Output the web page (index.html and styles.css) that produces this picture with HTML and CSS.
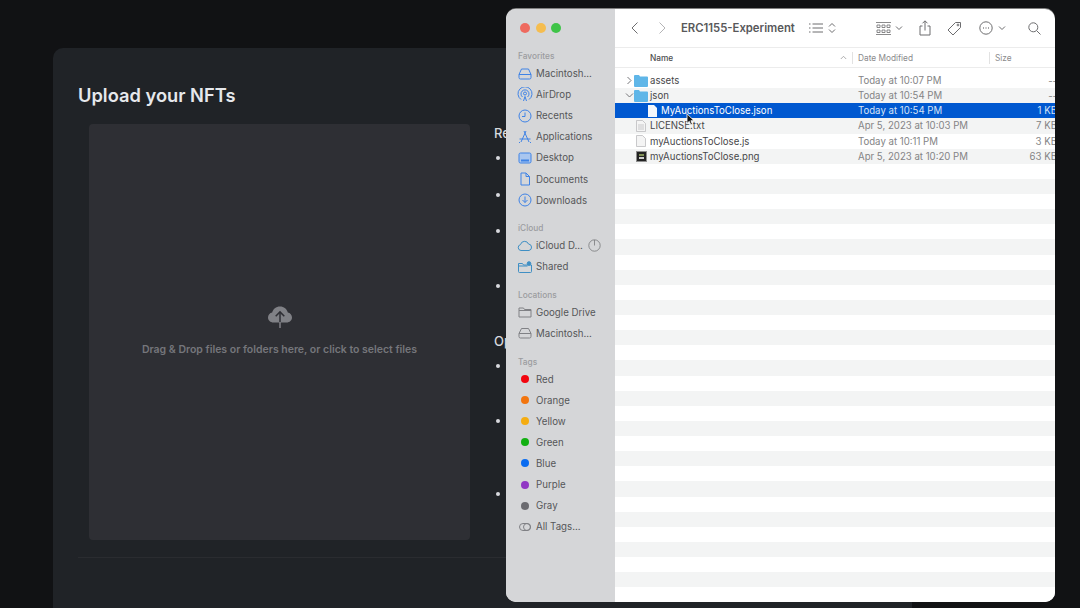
FILE: index.html
```html
<!DOCTYPE html>
<html lang="en">
<head>
  <meta charset="UTF-8" />
  <meta name="viewport" content="width=device-width, initial-scale=1.0"/>
  <title>Upload your NFTs</title>
  <link rel="stylesheet" href="styles.css">
</head>
<body>
  <main class="panel">
    <h1 class="panel-title">Upload your NFTs</h1>
    <div class="panel-body">
      <div class="dropzone">
        <svg class="upload-icon" width="26" height="24" viewBox="0 0 26 24">
          <path fill="#808186" d="M6.500 17.500C3.300 17.500 1 15.300 1 12.500c0-2.500 1.800-4.500 4.200-4.900C6 4 9 1.500 13 1.500s7 2.500 7.800 6.100c2.400.4 4.200 2.400 4.200 4.900 0 2.800-2.300 5-5.500 5z"/>
          <path fill="none" stroke="#2e2f34" stroke-width="1.500" d="M8.700 11.200 13 6.900l4.300 4.300"/>
          <path fill="none" stroke="#2e2f34" stroke-width="1.500" d="M13 7v10.500"/>
          <path fill="none" stroke="#808186" stroke-width="1.500" d="M13 17v6"/>
        </svg>
        <p class="dropzone-text">Drag &amp; Drop files or folders here, or click to select files</p>
      </div>
      <aside class="notes">
        <h2 class="notes-title">Re</h2>
        <ul class="notes-list">
          <li class="lines-2"></li>
          <li class="lines-2"></li>
          <li class="lines-3"></li>
          <li class="lines-2"></li>
        </ul>
        <h2 class="notes-title notes-second">Op</h2>
        <ul class="notes-list">
          <li class="lines-3"></li>
          <li class="lines-4"></li>
          <li class="lines-2"></li>
        </ul>
      </aside>
    </div>
    <div class="panel-rule"></div>
  </main>

  <section class="finder">
    <nav class="sidebar">
      <div class="traffic">
        <span class="light light-red"></span>
        <span class="light light-yellow"></span>
        <span class="light light-green"></span>
      </div>

      <h3 class="side-head">Favorites</h3>
      <div class="side-row"><svg class="side-icon blue" viewBox="0 0 16 16"><path d="M4.500 3h7l2.500 5.500v3a1.500 1.500 0 0 1-1.500 1.500h-9A1.500 1.500 0 0 1 2 11.500v-3zM2 8.500h12"/></svg>Macintosh...</div>
      <div class="side-row"><svg class="side-icon blue" viewBox="0 0 16 16"><circle cx="8" cy="6.500" r="1.500"/><path d="M5.500 10a4 4 0 1 1 5 0M4 12.500a7 7 0 1 1 8 0M6.500 14 8 9.500 9.500 14"/></svg>AirDrop</div>
      <div class="side-row"><svg class="side-icon blue" viewBox="0 0 16 16"><circle cx="8" cy="8" r="6"/><path d="M8 4.500V8.500H5"/></svg>Recents</div>
      <div class="side-row"><svg class="side-icon blue" viewBox="0 0 16 16"><path d="M9 2 4 13M7 2l5 11M2.500 10h11M2 14l1-1M14 14l-1-1"/></svg>Applications</div>
      <div class="side-row"><svg class="side-icon blue" viewBox="0 0 16 16"><rect x="2" y="3" width="12" height="10" rx="1.500" fill="#a9c6ef"/><path d="M4 10.500h8" stroke-width="2"/></svg>Desktop</div>
      <div class="side-row"><svg class="side-icon blue" viewBox="0 0 16 16"><path d="M4 2h5l3.500 3.500V14H4zM9 2v3.500h3.500"/></svg>Documents</div>
      <div class="side-row"><svg class="side-icon blue" viewBox="0 0 16 16"><circle cx="8" cy="8" r="6"/><path d="M8 4.500v6M5.500 8 8 10.500 10.500 8"/></svg>Downloads</div>

      <h3 class="side-head">iCloud</h3>
      <div class="side-row"><svg class="side-icon teal" viewBox="0 0 16 16"><path d="M4 12.500a3 3 0 0 1-.5-5.900A4.200 4.200 0 0 1 11.500 6a3.300 3.300 0 0 1 .5 6.500z"/></svg><span class="side-name">iCloud D...</span><svg class="side-status" width="13" height="13" viewBox="0 0 13 13"><circle cx="6.500" cy="6.500" r="5.700"/><path d="M6.500 1v5.500"/></svg></div>
      <div class="side-row"><svg class="side-icon teal" viewBox="0 0 16 16"><path d="M1.500 4.500h4l1 1.500h8v6.500a1 1 0 0 1-1 1h-11a1 1 0 0 1-1-1zM1.500 7h9"/><circle cx="12" cy="4.500" r="1.800" fill="#3f8fc4"/></svg>Shared</div>

      <h3 class="side-head">Locations</h3>
      <div class="side-row"><svg class="side-icon grey" viewBox="0 0 16 16"><path d="M2 4h4.500l1 1.500H14V13H2zM2 6.500h12"/></svg>Google Drive</div>
      <div class="side-row"><svg class="side-icon grey" viewBox="0 0 16 16"><path d="M4.500 3.500h7L14 8.500v3a1.500 1.500 0 0 1-1.500 1.500h-9A1.500 1.500 0 0 1 2 11.500v-3zM2 8.500h12"/></svg>Macintosh...</div>

      <h3 class="side-head">Tags</h3>
      <div class="side-row"><span class="tag-slot"><span class="tag-dot tag-red"></span></span>Red</div>
      <div class="side-row"><span class="tag-slot"><span class="tag-dot tag-orange"></span></span>Orange</div>
      <div class="side-row"><span class="tag-slot"><span class="tag-dot tag-yellow"></span></span>Yellow</div>
      <div class="side-row"><span class="tag-slot"><span class="tag-dot tag-green"></span></span>Green</div>
      <div class="side-row"><span class="tag-slot"><span class="tag-dot tag-blue"></span></span>Blue</div>
      <div class="side-row"><span class="tag-slot"><span class="tag-dot tag-purple"></span></span>Purple</div>
      <div class="side-row"><span class="tag-slot"><span class="tag-dot tag-gray"></span></span>Gray</div>
      <div class="side-row"><svg class="side-icon grey" viewBox="0 0 16 16"><rect x="2.500" y="4.500" width="11" height="7" rx="3.500"/><circle cx="10" cy="8" r="3.500"/></svg>All Tags...</div>
    </nav>

    <div class="content">
      <header class="toolbar">
        <svg class="tool chev-back" width="10" height="14" viewBox="0 0 10 14"><path d="M7.500 1.500 2 7l5.500 5.500"/></svg>
        <svg class="tool tool-faint chev-forward" width="10" height="14" viewBox="0 0 10 14"><path d="M2.500 1.500 8 7l-5.500 5.500"/></svg>
        <span class="folder-title">ERC1155-Experiment</span>
        <svg class="tool view-list" width="14" height="12" viewBox="0 0 14 12"><path d="M3.500 2H14M3.500 6H14M3.500 10H14M0 2h1.500M0 6h1.500M0 10h1.500"/></svg>
        <svg class="tool view-step" width="8" height="12" viewBox="0 0 8 12"><path d="M1 4.500 4 1.500l3 3M1 7.500l3 3 3-3"/></svg>
        <svg class="tool view-grid" width="15" height="13" viewBox="0 0 15 13"><path d="M0 .5h15M0 12.500h15M1 3h3v2.500H1zM6 3h3v2.500H6zM11 3h3v2.500h-3zM1 8h3v2.500H1zM6 8h3v2.500H6zM11 8h3v2.500h-3z" stroke-width=".8"/></svg>
        <svg class="tool small-chev" width="8" height="6" viewBox="0 0 8 6"><path d="M1 1.500 4 4.500l3-3"/></svg>
        <svg class="tool share" width="12" height="16" viewBox="0 0 12 16"><path d="M3.500 6H1v9h10V6H8.500M6 10.500V1M3.500 3.300 6 .8l2.500 2.500"/></svg>
        <svg class="tool tag" width="15" height="15" viewBox="0 0 15 15"><path d="M1 9 8.500 1.500 13.500 1.500V6.500L6 14z"/><circle cx="11" cy="4" r=".9"/></svg>
        <svg class="tool more" width="14" height="14" viewBox="0 0 14 14"><circle cx="7" cy="7" r="6.200"/><path d="M4 7h.8M6.600 7h.8M9.200 7h.8" stroke-width="1.300"/></svg>
        <svg class="tool small-chev more-chev" width="8" height="6" viewBox="0 0 8 6"><path d="M1 1.500 4 4.500l3-3"/></svg>
        <svg class="tool search" width="13" height="13" viewBox="0 0 13 13"><circle cx="5.300" cy="5.300" r="4.500"/><path d="m8.700 8.700 3.800 3.800"/></svg>
      </header>

      <div class="columns">
        <div class="col-name">Name<svg class="sort" width="7" height="5" viewBox="0 0 7 5"><path d="M.8 4 3.500 1.300 6.200 4"/></svg></div>
        <div class="col-date">Date Modified</div>
        <div class="col-size">Size</div>
      </div>

      <div class="files">
        <div class="file">
          <div class="col-name cell-name"><svg class="twist" width="7" height="9" viewBox="0 0 7 9"><path d="m1.500 1 3.500 3.500L1.500 8"/></svg><svg class="folder" width="14" height="12" viewBox="0 0 14 12"><path d="M1 0h4l1 1.500h7a1 1 0 0 1 1 1V11a1 1 0 0 1-1 1H1a1 1 0 0 1-1-1V1a1 1 0 0 1 1-1z"/></svg>assets</div>
          <div class="col-date">Today at 10:07 PM</div>
          <div class="col-size">--</div>
        </div>
        <div class="file">
          <div class="col-name cell-name"><svg class="twist" width="9" height="7" viewBox="0 0 9 7"><path d="m1 1.500 3.500 3.500L8 1.500"/></svg><svg class="folder" width="14" height="12" viewBox="0 0 14 12"><path d="M1 0h4l1 1.500h7a1 1 0 0 1 1 1V11a1 1 0 0 1-1 1H1a1 1 0 0 1-1-1V1a1 1 0 0 1 1-1z"/></svg>json</div>
          <div class="col-date">Today at 10:54 PM</div>
          <div class="col-size">--</div>
        </div>
        <div class="file file-selected">
          <div class="col-name cell-child"><svg class="doc-white" width="9" height="12" viewBox="0 0 9 12"><path d="M0 0h6l3 3v9H0z"/></svg>MyAuctionsToClose.json</div>
          <div class="col-date">Today at 10:54 PM</div>
          <div class="col-size">1 KB</div>
        </div>
        <div class="file">
          <div class="col-name cell-name cell-flat"><svg class="doc" width="10" height="12" viewBox="0 0 10 12"><path d="M.5.500h6l3 3v8h-9zM2 5h6M2 7h6M2 9h6"/></svg>LICENSE.txt</div>
          <div class="col-date">Apr 5, 2023 at 10:03 PM</div>
          <div class="col-size">7 KB</div>
        </div>
        <div class="file">
          <div class="col-name cell-name cell-flat"><svg class="doc" width="10" height="12" viewBox="0 0 10 12"><path d="M.5.500h6l3 3v8h-9z"/></svg>myAuctionsToClose.js</div>
          <div class="col-date">Today at 10:11 PM</div>
          <div class="col-size">3 KB</div>
        </div>
        <div class="file">
          <div class="col-name cell-name cell-flat"><svg class="thumb" width="11" height="11" viewBox="0 0 11 11"><rect width="11" height="11" fill="#8f8f8f"/><rect x="1" y="1" width="9" height="9" fill="#232323"/><rect x="3" y="3" width="5" height="2" fill="#7f8f55"/><rect x="3" y="6" width="5" height="2" fill="#cfcfcf"/></svg>myAuctionsToClose.png</div>
          <div class="col-date">Apr 5, 2023 at 10:20 PM</div>
          <div class="col-size">63 KB</div>
        </div>
      </div>
    </div>

    <svg class="cursor" width="9" height="13" viewBox="0 0 9 13"><path d="M1 .8v9.600l2.300-2.100 1.500 3.600 1.600-.7-1.500-3.500h3.100z" fill="#111" stroke="#fff" stroke-width=".8"/></svg>
  </section>
</body>
</html>
```

FILE: styles.css
```css
* {
  box-sizing: border-box;
}

body {
  margin: 0;
  padding: 48px 168px 0 53px;
  height: 608px;
  overflow: hidden;
  background-color: #111214;
  font-family: Inter, "Noto Sans", sans-serif;
}

/* page behind the finder window */
.panel {
  height: 560px;
  padding: 36px 0 0 25px;
  background-color: #202327;
  border-radius: 10px 10px 0 0;
}

.panel-title {
  margin: 0;
  height: 22px;
  font-size: 18.300px;
  line-height: 22px;
  font-weight: 600;
  color: #e6e8ec;
}

.panel-body {
  display: flex;
  margin: 18px 0 0 11px;
}

.dropzone {
  display: flex;
  flex-direction: column;
  align-items: center;
  justify-content: center;
  width: 381px;
  height: 416px;
  padding-bottom: 3px;
  background-color: #2e2f34;
  border-radius: 4px;
}

.dropzone-text {
  margin: 14px 0 0;
  font-size: 10.500px;
  font-weight: 600;
  color: #75767b;
}

.notes {
  margin-left: 24px;
  flex: 1;
  color: #d8dade;
}

.notes-title {
  margin: 0;
  height: 18px;
  font-size: 13px;
  line-height: 18px;
  font-weight: 500;
}

.notes-second {
  margin-top: 19px;
}

.notes-list {
  margin: 7px 0 0;
  padding: 0;
  list-style: none;
}

.notes-list li {
  position: relative;
}

.notes-list li::before {
  content: "";
  position: absolute;
  left: 2px;
  top: 7px;
  width: 4px;
  height: 4px;
  border-radius: 50%;
  background-color: #d8dade;
}

.lines-2 { height: 36.500px; }
.lines-3 { height: 54.500px; }
.lines-4 { height: 73px; }

.panel-rule {
  height: 1px;
  margin-top: 17px;
  background-color: #2a2c30;
}

/* finder window */
.finder {
  position: absolute;
  left: 506px;
  top: 9px;
  width: 549px;
  height: 593px;
  display: flex;
  overflow: hidden;
  border-radius: 10px;
  background-color: #fff;
  box-shadow: 0 -1px 0 #808080;
}

.sidebar {
  width: 109px;
  flex-shrink: 0;
  background-color: #d5d6d8;
  color: #555659;
  font-size: 9.700px;
}

.traffic {
  display: flex;
  gap: 5.500px;
  height: 40px;
  padding: 14px 0 0 14px;
}

.light {
  width: 10px;
  height: 10px;
  border-radius: 50%;
}

.light-red { background-color: #ee6a5f; }
.light-yellow { background-color: #f5bd4f; }
.light-green { background-color: #3fc448; }

.side-head {
  margin: 10.500px 0 0 12px;
  height: 14px;
  font-size: 8.300px;
  line-height: 14px;
  font-weight: 500;
  color: #9b9c9f;
}

.traffic + .side-head {
  margin-top: 0;
}

.side-row {
  display: flex;
  align-items: center;
  height: 21.100px;
  padding-left: 11px;
  white-space: nowrap;
}

.side-icon {
  width: 16px;
  height: 16px;
  margin-right: 3px;
  flex-shrink: 0;
  fill: none;
  stroke-width: 1;
}

.blue { stroke: #3f83e6; }
.teal { stroke: #3f8fc4; }
.grey { stroke: #808185; }

.side-name {
  width: 52px;
}

.side-status {
  fill: none;
  stroke: #77787b;
  stroke-width: .8;
}

.tag-slot {
  display: flex;
  align-items: center;
  justify-content: center;
  width: 16px;
  margin-right: 3px;
}

.tag-dot {
  width: 8px;
  height: 8px;
  border-radius: 50%;
}

.tag-red { background-color: #f2050f; }
.tag-orange { background-color: #f2750f; }
.tag-yellow { background-color: #f5ad12; }
.tag-green { background-color: #12b012; }
.tag-blue { background-color: #0a6cf0; }
.tag-purple { background-color: #9138c4; }
.tag-gray { background-color: #6b6b70; }

.content {
  flex: 1;
  min-width: 0;
}

.toolbar {
  display: flex;
  align-items: center;
  height: 39px;
  padding-left: 15px;
  border-bottom: 1px solid #ececec;
}

.tool {
  flex-shrink: 0;
  fill: none;
  stroke: #6d6d6f;
  stroke-width: 1;
}

.tool-faint {
  stroke: #b4b4b6;
}

.chev-forward { margin-left: 17px; }

.folder-title {
  width: 128px;
  margin-left: 14px;
  font-size: 11.300px;
  font-weight: 600;
  color: #58585a;
  white-space: nowrap;
}

.view-step { margin-left: 5px; }
.view-grid { margin-left: 40px; }
.small-chev { margin-left: 4px; }
.share { margin-left: 16px; }
.tag { margin-left: 16px; }
.more { margin-left: 17px; }
.more-chev { margin-left: 5px; }
.search { margin-left: 22px; }

.columns {
  display: flex;
  align-items: center;
  height: 20px;
  font-size: 8.300px;
  color: #8a8a8c;
  border-bottom: 1px solid #ececec;
}

.columns .col-name {
  padding-left: 35px;
  color: #4c4c4e;
  font-weight: 500;
  position: relative;
  height: 12px;
  line-height: 12px;
  border-right: 1px solid #e2e2e2;
}

.columns .col-date {
  height: 12px;
  line-height: 12px;
  border-right: 1px solid #e2e2e2;
}

.sort {
  position: absolute;
  right: 5px;
  top: 3px;
  fill: none;
  stroke: #9a9a9c;
  stroke-width: .8;
}

.col-name {
  width: 238px;
  flex-shrink: 0;
}

.col-date {
  width: 137px;
  flex-shrink: 0;
  padding-left: 5px;
}

.col-size {
  width: 66px;
  flex-shrink: 0;
  padding-left: 5px;
}

/* stripes keep going below the last file, like a real list view */
.files {
  margin-top: 5px;
  height: 529px;
  background-image: repeating-linear-gradient(
    #fff 0, #fff 15.125px, #f3f4f4 15.125px, #f3f4f4 30.25px
  );
  font-size: 9.650px;
}

.file {
  display: flex;
  align-items: center;
  height: 15.125px;
  color: #838385;
  white-space: nowrap;
}

.file .col-size {
  padding-left: 0;
  width: 66px;
  text-align: right;
  margin-left: 1px;
}

.cell-name {
  display: flex;
  align-items: center;
  padding-left: 10px;
  color: #48484a;
}

.cell-flat {
  padding-left: 21px;
}

.twist {
  width: 9px;
  fill: none;
  stroke: #77777a;
  stroke-width: 1;
}

.folder {
  margin-right: 2px;
  fill: #5fb6e8;
}

.doc {
  margin-right: 4px;
  fill: #f4f4f4;
  stroke: #b5b5b7;
  stroke-width: .7;
}

.thumb {
  margin-right: 3px;
}

.file-selected {
  background-color: #0058d0;
  color: #d5e2f6;
}

.cell-child {
  display: flex;
  align-items: center;
  padding-left: 33px;
  color: #fff;
}

.doc-white {
  margin-right: 4px;
  fill: #f4f7fb;
}

.cursor {
  position: absolute;
  left: 180px;
  top: 104px;
}
```
